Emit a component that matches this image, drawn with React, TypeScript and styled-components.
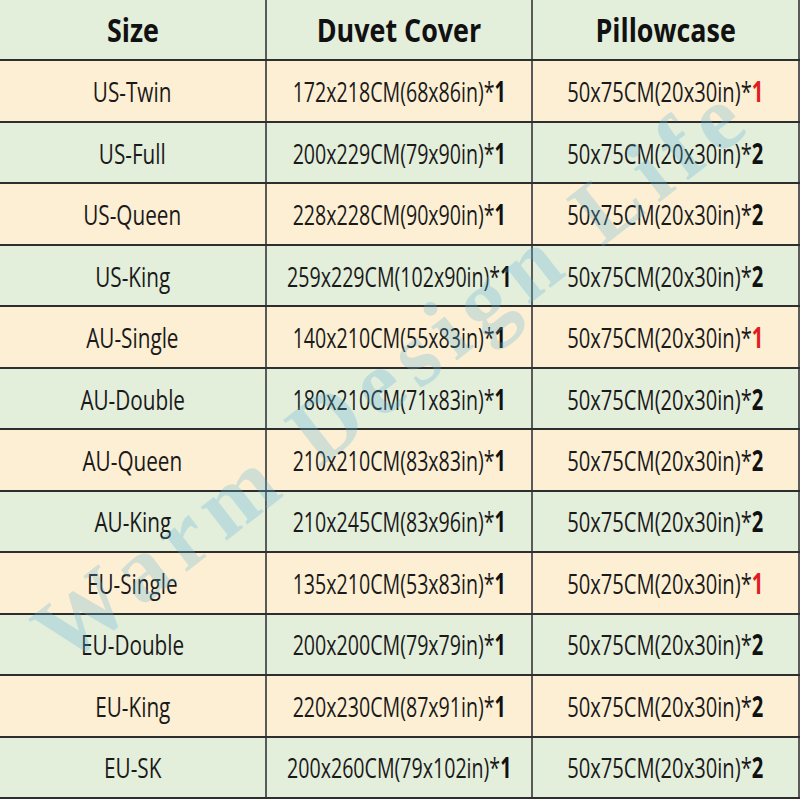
import * as React from 'react';
import styled, { createGlobalStyle } from 'styled-components';

const GlobalStyle = createGlobalStyle`
	html, body {
		margin: 0;
		padding: 0;
		background: #ffffff;
	}
`;

interface SizeRow {
	size: string;
	duvet: string;
	pillows: number;
}

const rows: SizeRow[] = [
	{ size: 'US-Twin', duvet: '172x218CM(68x86in)', pillows: 1 },
	{ size: 'US-Full', duvet: '200x229CM(79x90in)', pillows: 2 },
	{ size: 'US-Queen', duvet: '228x228CM(90x90in)', pillows: 2 },
	{ size: 'US-King', duvet: '259x229CM(102x90in)', pillows: 2 },
	{ size: 'AU-Single', duvet: '140x210CM(55x83in)', pillows: 1 },
	{ size: 'AU-Double', duvet: '180x210CM(71x83in)', pillows: 2 },
	{ size: 'AU-Queen', duvet: '210x210CM(83x83in)', pillows: 2 },
	{ size: 'AU-King', duvet: '210x245CM(83x96in)', pillows: 2 },
	{ size: 'EU-Single', duvet: '135x210CM(53x83in)', pillows: 1 },
	{ size: 'EU-Double', duvet: '200x200CM(79x79in)', pillows: 2 },
	{ size: 'EU-King', duvet: '220x230CM(87x91in)', pillows: 2 },
	{ size: 'EU-SK', duvet: '200x260CM(79x102in)', pillows: 2 },
];

export default function App() {
	return (
		<>
			<GlobalStyle />
			<Sheet>
				<Table>
					<Row $tone="green">
						<Cell><HeadText>Size</HeadText></Cell>
						<Cell><HeadText>Duvet Cover</HeadText></Cell>
						<Cell><HeadText>Pillowcase</HeadText></Cell>
					</Row>
					{rows.map((r, i) => (
						<Row key={r.size} $tone={i % 2 === 0 ? 'beige' : 'green'}>
							<Cell><BodyText $scale={0.74}>{r.size}</BodyText></Cell>
							<Cell>
								<BodyText $scale={0.7}>
									{r.duvet}*<Count>1</Count>
								</BodyText>
							</Cell>
							<Cell>
								<BodyText $scale={0.72}>
									50x75CM(20x30in)*<Count $red={r.pillows === 1}>{r.pillows}</Count>
								</BodyText>
							</Cell>
						</Row>
					))}
				</Table>
				<Watermark>Warm Design Life</Watermark>
			</Sheet>
		</>
	);
}

const Sheet = styled.div`
	position: relative;
	width: 800px;
	height: 800px;
	overflow: hidden;
	background: #ffffff;
`;

const Table = styled.div`
	display: flex;
	flex-direction: column;
	width: 800px;
	height: 799px;
`;

const Row = styled.div<{ $tone: 'green' | 'beige' }>`
	flex: 1;
	display: grid;
	grid-template-columns: 267px 266px 267px;
	border-bottom: 2px solid #2e2e2e;
	background: ${(p) => (p.$tone === 'green' ? '#e3eedb' : '#fdefd3')};
`;

const Cell = styled.div`
	display: flex;
	align-items: center;
	justify-content: center;
	border-right: 2px solid #5a5a5a;
	overflow: visible;
	white-space: nowrap;
`;

const HeadText = styled.span`
	display: inline-block;
	font-family: 'Open Sans', 'Noto Sans', sans-serif;
	font-weight: 700;
	font-size: 32px;
	color: #111111;
	transform: scaleX(0.84);
`;

const BodyText = styled.span<{ $scale: number }>`
	display: inline-block;
	font-family: 'Open Sans', 'Noto Sans', sans-serif;
	font-weight: 400;
	font-size: 28px;
	color: #1a1a1a;
	transform: scaleX(${(p) => p.$scale});
`;

const Count = styled.b<{ $red?: boolean }>`
	font-weight: 700;
	color: ${(p) => (p.$red ? '#e01b22' : '#111111')};
`;

const Watermark = styled.div`
	position: absolute;
	left: 392px;
	top: 372px;
	transform: translate(-50%, -50%) rotate(-38deg);
	font-family: 'Liberation Serif', 'DejaVu Serif', serif;
	font-weight: 700;
	font-size: 92px;
	letter-spacing: 10px;
	white-space: nowrap;
	color: rgba(95, 180, 215, 0.28);
	pointer-events: none;
`;
